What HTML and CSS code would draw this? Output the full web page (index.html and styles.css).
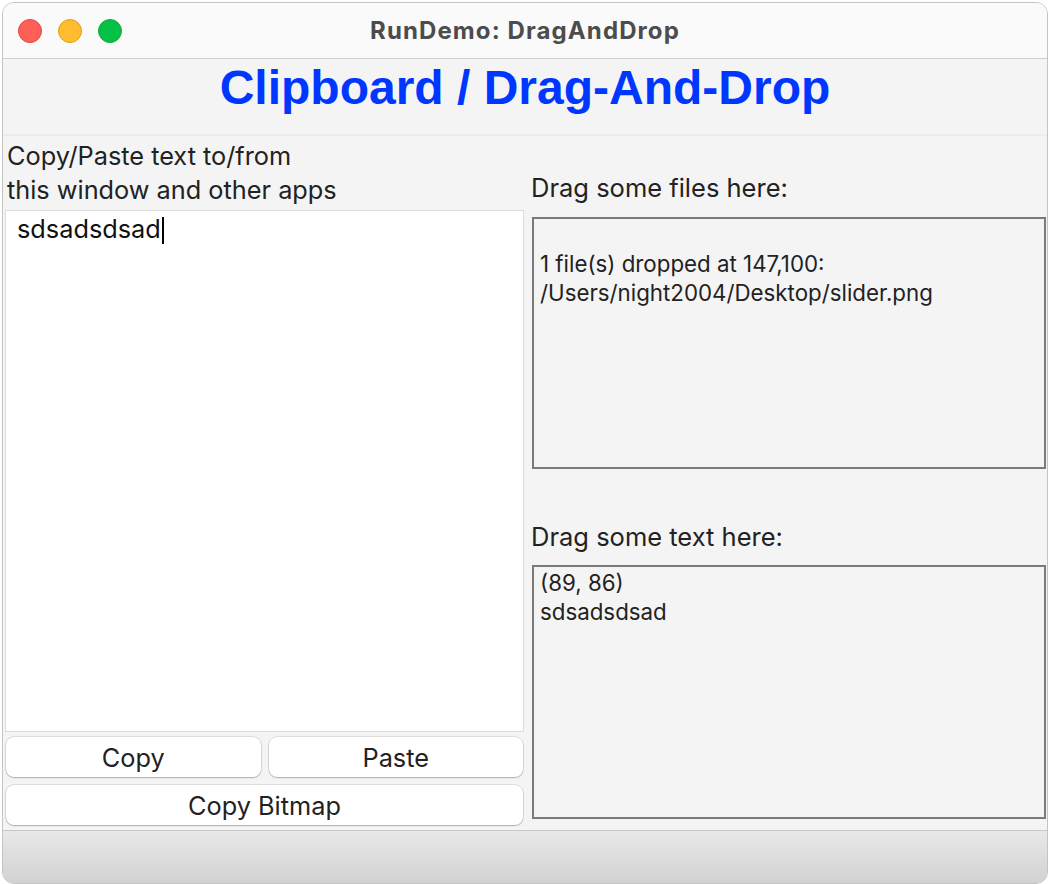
FILE: index.html
```html
<!DOCTYPE html>
<html>
<head>
<meta charset="utf-8">
<link rel="stylesheet" href="styles.css">
</head>
<body>
<div class="window">
  <div class="titlebar">
    <div class="lights">
      <span class="light red"></span>
      <span class="light yellow"></span>
      <span class="light green"></span>
    </div>
    <div class="wtitle">RunDemo: DragAndDrop</div>
  </div>
  <div class="header"><h1 class="heading">Clipboard / Drag-And-Drop</h1></div>
  <div class="content">
    <div class="left">
      <div class="label">Copy/Paste text to/from<br>this window and other apps</div>
      <div class="editor"><span class="typed">sdsadsdsad</span><span class="caret"></span></div>
      <div class="buttons">
        <button class="btn">Copy</button>
        <button class="btn">Paste</button>
        <button class="btn wide">Copy Bitmap</button>
      </div>
    </div>
    <div class="right">
      <div class="label rlabel">Drag some files here:</div>
      <div class="dropbox files">&nbsp;<br>1 file(s) dropped at 147,100:<br>/Users/night2004/Desktop/slider.png</div>
      <div class="label rlabel second">Drag some text here:</div>
      <div class="dropbox texts">(89, 86)<br>sdsadsdsad</div>
    </div>
  </div>
  <div class="footer"></div>
</div>
</body>
</html>
```
FILE: styles.css
```css
html, body {
  margin: 0;
  padding: 0;
  background: #ffffff;
  overflow: hidden;
}
body {
  width: 1050px;
  height: 884px;
  font-family: Inter, "Noto Sans", sans-serif;
  color: #222;
}
.window {
  margin: 2px 0 0 2px;
  width: 1046px;
  height: 882px;
  border: 1px solid #c4c4c4;
  border-radius: 12px;
  overflow: hidden;
  background: #f4f4f4;
  display: flex;
  flex-direction: column;
  box-sizing: border-box;
}
.titlebar {
  height: 55px;
  flex: none;
  background: #fafafa;
  border-bottom: 1px solid #cfcfcf;
  display: flex;
  align-items: center;
  justify-content: center;
  position: relative;
}
.lights {
  position: absolute;
  left: 15px;
  top: 16px;
  display: flex;
  gap: 16px;
}
.light {
  width: 24px;
  height: 24px;
  border-radius: 50%;
  box-sizing: border-box;
}
.red { background: #fe5f57; border: 1px solid #e2463f; }
.yellow { background: #febc2e; border: 1px solid #e1a116; }
.green { background: #05c046; border: 1px solid #14ae2e; }
.wtitle {
  font-weight: 700;
  font-size: 24px;
  letter-spacing: 1.1px;
  color: #4c4c4c;
}
.header {
  height: 77px;
  flex: none;
  display: flex;
  align-items: center;
  justify-content: center;
  border-bottom: 2px solid #ececec;
  box-sizing: border-box;
}
.heading {
  margin: 0;
  font-family: "Liberation Sans", Arial, sans-serif;
  font-weight: 700;
  font-size: 48px;
  color: #0037ff;
  padding-bottom: 18px;
}
.content {
  flex: none;
  height: 694px;
  display: grid;
  grid-template-columns: 521px 1fr;
}
.left {
  padding: 3px 0 0 2px;
  display: flex;
  flex-direction: column;
}
.label {
  font-size: 25.3px;
  line-height: 34px;
  color: #222;
  padding-left: 2px;
}
.editor {
  margin-top: 3px;
  background: #fff;
  border: 1px solid #dcdcdc;
  padding: 2px 0 0 11px;
  font-size: 25.3px;
  line-height: 32px;
  color: #111;
  box-sizing: border-box;
  height: 522px;
}
.caret {
  display: inline-block;
  width: 2px;
  height: 27px;
  background: #000;
  vertical-align: -6px;
  margin-left: 1px;
}
.buttons {
  margin-top: 5px;
  display: grid;
  grid-template-columns: 1fr 1fr;
  gap: 8px 8px;
  padding: 0 1px 0 1px;
}
.btn {
  height: 40px;
  background: #fff;
  border: none;
  border-radius: 8px;
  box-shadow: 0 0 0 0.5px rgba(0,0,0,0.18), 0 1px 1.5px rgba(0,0,0,0.22);
  font-family: Inter, "Noto Sans", sans-serif;
  font-size: 25.3px;
  color: #222;
  padding: 0;
}
.wide { grid-column: 1 / 3; }
.right {
  padding: 35px 1px 0 8px;
  display: flex;
  flex-direction: column;
}
.rlabel { padding-left: 0; font-size: 25.5px; margin-left: -1px; }
.rlabel.second { margin-top: 51px; }
.dropbox {
  margin-top: 12px;
  border: 2px solid #7a7a7a;
  background: #f4f4f4;
  font-size: 22.3px;
  line-height: 29px;
  padding: 1px 6px;
  color: #222;
  box-sizing: border-box;
}
.files { height: 252px; }
.texts { height: 254px; margin-top: 11px; }
.footer {
  flex: 1;
  border-top: 1px solid #c8c8c8;
  background: linear-gradient(#e8e8e8, #d2d2d2);
}
```
